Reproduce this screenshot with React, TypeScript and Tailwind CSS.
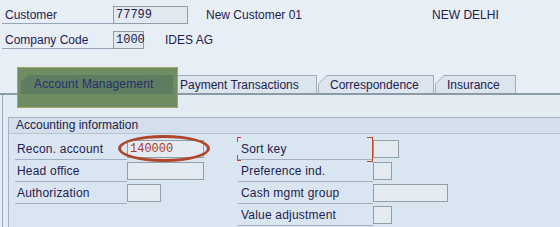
import React from "react";

const TopField = ({ label, value, w, after }: { label: string; value: string; w: string; after: React.ReactNode }) => (
  <div className="flex items-end h-[18px]">
    <div className="ml-[2px] w-[111px] border-b border-[#94a6b8] pl-[3px] leading-[15px] text-[#1d2150]">{label}</div>
    <div className={`${w} h-[18px] border border-[#8e9fa5] bg-[#e2e9f0] pl-[2px] leading-[16px] font-['Liberation_Mono',monospace] text-[#1d2150]`}>{value}</div>
    {after}
  </div>
);

const Row = ({ label, lw, iw, value, red, pl }: { label: string; lw: string; iw: string; value?: string; red?: boolean; pl: string }) => (
  <div className="flex items-center h-[22px]">
    <div className={`${lw} h-full border-b border-[#9fb0c2] ${pl} flex items-center tracking-[0.2px] text-[#1d2150]`}>{label}</div>
    <div className={`${iw} h-[18px] border border-[#8e9fa5] bg-[#e3eaf2] pl-[2px] leading-[16px] font-['Liberation_Mono',monospace] ${red ? "text-[#a83c1c]" : "text-[#1d2150]"}`}>{value ?? ""}</div>
  </div>
);

const Tab = ({ label, w, ml }: { label: string; w: string; ml: string }) => (
  <div className={`${w} ${ml} h-[18px] bg-[#9eadbb] pt-[1px] pl-[1px] pr-[1px] [clip-path:polygon(9px_0,100%_0,100%_100%,0_100%,0_9px)]`}>
    <div className="h-full bg-[#dce4ed] pl-[11px] pt-[2px] leading-[14px] text-[#1d2150] [clip-path:polygon(8px_0,100%_0,100%_100%,0_100%,0_8px)]">{label}</div>
  </div>
);

export default function App() {
  return (
    <div className="relative w-[560px] h-[227px] overflow-hidden bg-[#e8eef5] font-['Liberation_Sans',Arial,sans-serif] text-[12px]">
      <div className="pt-[6px] flex flex-col gap-[7px]">
        <TopField
          label="Customer"
          value="77799"
          w="w-[75px]"
          after={
            <>
              <div className="ml-[18px] leading-[18px] text-[#1d2150]">New Customer 01</div>
              <div className="ml-[130px] leading-[18px] text-[#1d2150]">NEW DELHI</div>
            </>
          }
        />
        <TopField
          label="Company Code"
          value="1000"
          w="w-[31px]"
          after={<div className="ml-[21px] leading-[18px] text-[#1d2150]">IDES AG</div>}
        />
      </div>

      {/* tab strip */}
      <div className="mt-[26px] h-[20px] flex items-end border-b-2 border-[#8a9aa6]">
        <div className="ml-[22px] w-[146px] h-[18px]" />
        <Tab label="Payment Transactions" w="w-[149px]" ml="ml-0" />
        <Tab label="Correspondence" w="w-[116px]" ml="ml-[1px]" />
        <Tab label="Insurance" w="w-[81px]" ml="ml-[1px]" />
      </div>

      {/* panel */}
      <div className="ml-[2px] border-l border-[#98a8b8] bg-[#e3ebf3] h-[132px]">
        <div className="h-[22px]" />
        <div className="ml-[5px] border-t border-l border-[#a3b3c3] h-full">
          <div className="h-[16px] bg-[#d3dfea] border-b border-[#b6c4d2] pl-[7px] leading-[15px] text-[#1d2150]">Accounting information</div>
          <div className="bg-[#d9e5f1] h-full pt-[4px] flex">
            <div className="ml-[6px] w-[223px] flex flex-col">
              <Row label="Recon. account" lw="w-[112px]" iw="w-[77px]" value="140000" red pl="pl-[2px]" />
              <Row label="Head office" lw="w-[112px]" iw="w-[77px]" pl="pl-[2px]" />
              <Row label="Authorization" lw="w-[112px]" iw="w-[34px]" pl="pl-[2px]" />
            </div>
            <div className="flex flex-col">
              <Row label="Sort key" lw="w-[135px]" iw="w-[26px]" pl="pl-[3px]" />
              <Row label="Preference ind." lw="w-[135px]" iw="w-[19px]" pl="pl-[3px]" />
              <Row label="Cash mgmt group" lw="w-[135px]" iw="w-[75px]" pl="pl-[3px]" />
              <Row label="Value adjustment" lw="w-[135px]" iw="w-[19px]" pl="pl-[3px]" />
            </div>
          </div>
        </div>
      </div>

      {/* green highlight over active tab */}
      <div className="absolute left-[17px] top-[67px] w-[161px] h-[41px] bg-[#708c63] border border-[#a0a66a]">
        <div className="absolute left-[3px] top-[7px] w-[152px] h-[19px] bg-[#5d7c60] [clip-path:polygon(7px_0,100%_0,100%_100%,0_100%,0_7px)] pl-[13px] pt-[2px] leading-[15px] tracking-[0.15px] text-[#262f6a]">
          Account Management
        </div>
      </div>

      {/* red oval */}
      <div className="absolute left-[118px] top-[135px] w-[92px] h-[27px] rounded-[50%] border-[3px] border-[#b0452a]" />

      {/* red brackets around Sort key */}
      <div className="absolute left-[237px] top-[137px] w-[4px] h-[5px] border-t border-l border-[#c2441f]" />
      <div className="absolute left-[237px] top-[155px] w-[4px] h-[6px] border-b border-l border-[#c2441f]" />
      <div className="absolute left-[367px] top-[137px] w-[6px] h-[25px] border-t border-r border-b border-[#c2441f]" />
    </div>
  );
}
